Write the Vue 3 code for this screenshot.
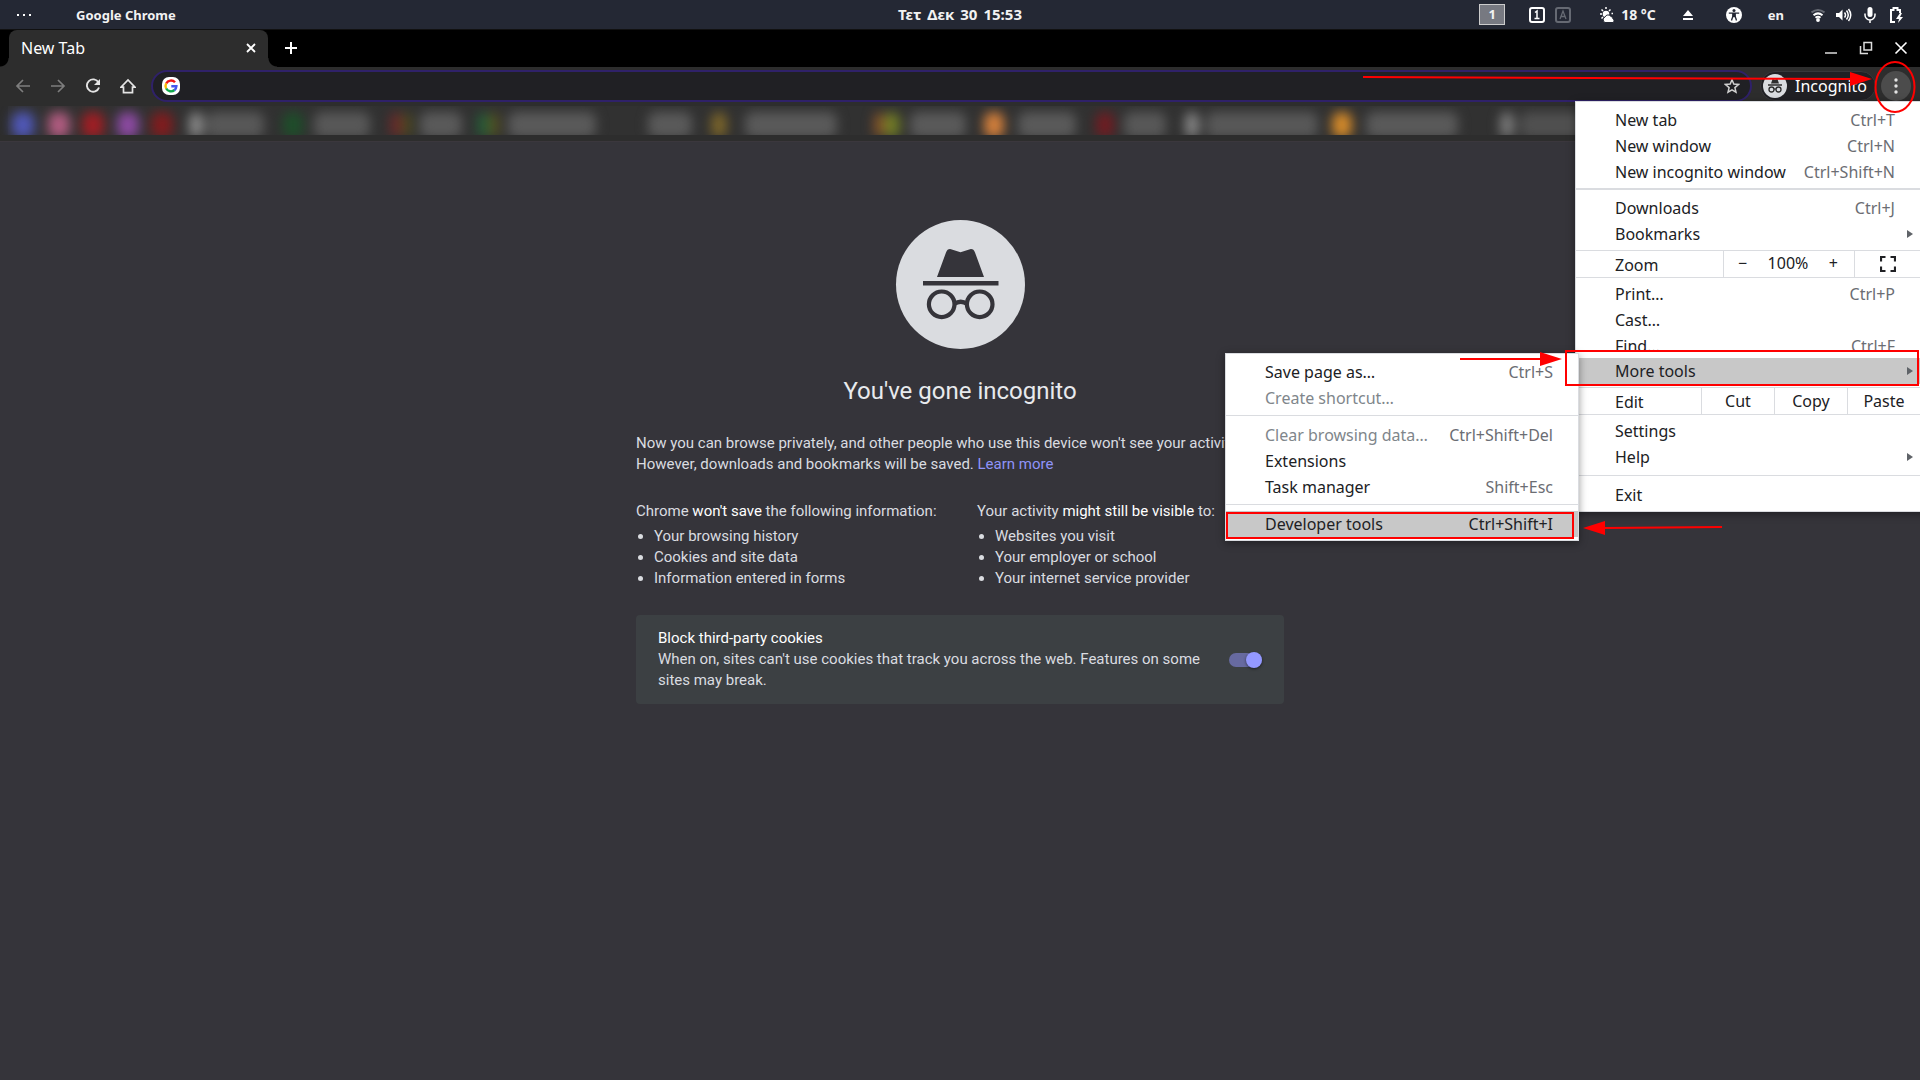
<script setup>
const blurs = [
  { x: 12, w: 22, c: '#5058b8' }, { x: 48, w: 22, c: '#b05c80' }, { x: 82, w: 22, c: '#a01e24' },
  { x: 117, w: 22, c: '#8c4aa2' }, { x: 151, w: 22, c: '#801c1e' }, { x: 189, w: 14, c: '#8a8a8a' },
  { x: 206, w: 58, c: '#585858' }, { x: 283, w: 20, c: '#1e4e2a' }, { x: 314, w: 56, c: '#585858' },
  { x: 390, w: 12, c: '#6a2a2a' }, { x: 402, w: 10, c: '#4c4a20' }, { x: 420, w: 42, c: '#5a5a5a' },
  { x: 477, w: 12, c: '#265c38' }, { x: 489, w: 10, c: '#565220' }, { x: 508, w: 88, c: '#5a5a5a' },
  { x: 648, w: 44, c: '#5a5a5a' }, { x: 711, w: 16, c: '#7a642a' }, { x: 745, w: 92, c: '#5a5a5a' },
  { x: 874, w: 10, c: '#865228' }, { x: 884, w: 16, c: '#707c26' }, { x: 910, w: 56, c: '#5a5a5a' },
  { x: 984, w: 20, c: '#d4803c' }, { x: 1018, w: 58, c: '#5a5a5a' }, { x: 1096, w: 18, c: '#701c22' },
  { x: 1124, w: 42, c: '#585858' }, { x: 1185, w: 14, c: '#868686' }, { x: 1206, w: 112, c: '#585858' },
  { x: 1332, w: 20, c: '#d48a2a' }, { x: 1366, w: 92, c: '#5a5a5a' }, { x: 1500, w: 14, c: '#7a7a7a' },
  { x: 1520, w: 90, c: '#505050' },
]
const infoColumns = [
  { lead: 'Chrome ', strong: "won't save", tail: ' the following information:',
    items: ['Your browsing history', 'Cookies and site data', 'Information entered in forms'] },
  { lead: 'Your activity ', strong: 'might still be visible', tail: ' to:',
    items: ['Websites you visit', 'Your employer or school', 'Your internet service provider'] },
]
</script>

<template>
  <div class="desktop">
    <header class="panel">
      <div class="panel-left">
        <span class="dots"><i></i><i></i><i></i></span>
        <span>Google Chrome</span>
      </div>
      <time class="clock"><span>Τετ</span><span>Δεκ</span><span>30</span><span>15:53</span></time>
      <div class="panel-right">
        <span class="workspace">1</span>
        <svg class="lock" width="42" height="16" viewBox="0 0 42 16" fill="none">
          <rect x="1" y="1" width="14" height="14" rx="2" stroke="#fff" stroke-width="2" />
          <path d="M6 5.500l2-1.500v7.500M5.500 11.500h5" stroke="#fff" stroke-width="1.500" />
          <rect x="27" y="1" width="14" height="14" rx="2" stroke="#666a73" stroke-width="2" />
          <path d="M31 12l3-8 3 8M32 9.500h4" stroke="#666a73" stroke-width="1.300" />
        </svg>
        <svg class="weather" width="16" height="16" viewBox="0 0 16 16">
          <circle cx="7" cy="7" r="3.300" fill="#fff" />
          <path d="M7 0v2M1 7h2M2.500 2.500l1.500 1.500M11.500 2.500L10 4M2.500 11.500L4 10M14 6.500h-1.500" stroke="#fff" stroke-width="1.500" />
          <path d="M6 15.500a3 3 0 010-5.500 3.400 3.400 0 016-.5 2.500 2.500 0 012 2.500 2 2 0 010 3.500z" fill="#fff" stroke="#242834" />
        </svg>
        <span class="temp">18 °C</span>
        <svg class="eject" width="12" height="12" viewBox="0 0 12 12" fill="#fff"><path d="M6 1l5 6H1zM1 9h10v2H1z" /></svg>
        <svg class="access" width="16" height="16" viewBox="0 0 16 16">
          <circle cx="8" cy="8" r="8" fill="#fff" />
          <circle cx="8" cy="3.500" r="1.500" fill="#242834" />
          <path d="M2.800 6.200h10.400M6.800 6.500v3L5.500 13.500M9.200 6.500v3l1.300 4M7 6.500h2v3H7z" stroke="#242834" stroke-width="1.300" fill="#242834" />
        </svg>
        <span class="lang">en</span>
        <svg class="wifi" width="14" height="14" viewBox="0 0 14 14" fill="none" stroke="#fff" stroke-width="2">
          <path d="M.5 4.500q6.500-5 13 0" stroke="#666a73" /><path d="M2.500 7.200q4.500-3.600 9 0M4.500 9.800q2.500-2 5 0" /><circle cx="7" cy="12" r=".9" fill="#fff" />
        </svg>
        <svg class="sound" width="16" height="14" viewBox="0 0 16 14" fill="none" stroke="#fff" stroke-width="1.500">
          <path d="M0 5h3l3.500-3.500v11L3 9H0z" fill="#fff" stroke="none" /><path d="M8.500 4.500q2 2.500 0 5M10.500 2.500q3.500 4.500 0 9M12.500 1q4.500 6 0 12" />
        </svg>
        <svg class="mic" width="12" height="16" viewBox="0 0 12 16" fill="none" stroke="#fff" stroke-width="1.500">
          <rect x="3.500" y="0" width="5" height="10" rx="2.500" fill="#fff" stroke="none" /><path d="M1 6.500v1.500a5 5 0 0010 0V6.500M6 13v3" />
        </svg>
        <svg class="battery" width="15" height="16" viewBox="0 0 15 16">
          <path d="M6 15H2V3h2.500V1h4v2H11v3" fill="none" stroke="#fff" stroke-width="2" /><path d="M11 6l-4 6h3l-1 4 5-6h-3l2-4z" fill="#fff" />
        </svg>
      </div>
    </header>

    <div class="tabstrip">
      <div class="tab"><span>New Tab</span>
        <button class="icon-btn" aria-label="Close tab"><svg width="10" height="10" viewBox="0 0 10 10"><path d="M1 1l8 8M9 1L1 9" stroke="#fff" stroke-width="1.800" /></svg></button>
      </div>
      <button class="icon-btn new-tab" aria-label="Open a new tab"><svg width="14" height="14" viewBox="0 0 14 14"><path d="M7 1v12M1 7h12" stroke="#fff" stroke-width="2" /></svg></button>
      <div class="window-controls">
        <button class="icon-btn" aria-label="Minimize"><svg width="14" height="14" viewBox="0 0 14 14"><path d="M1 12h12" stroke="#ddd" stroke-width="1.500" /></svg></button>
        <button class="icon-btn" aria-label="Restore"><svg width="14" height="14" viewBox="0 0 14 14" fill="none" stroke="#ddd" stroke-width="1.500"><path d="M5 1.500h7.500V9H5zM1.500 5v7.500H9" /></svg></button>
        <button class="icon-btn" aria-label="Close"><svg width="14" height="14" viewBox="0 0 14 14"><path d="M1.500 1.500l11 11M12.500 1.500l-11 11" stroke="#fff" stroke-width="1.600" /></svg></button>
      </div>
    </div>

    <div class="toolbar">
      <div class="nav">
        <button class="icon-btn" aria-label="Back"><svg width="16" height="16" viewBox="0 0 16 16" fill="none" stroke="#7d7d7d" stroke-width="1.700"><path d="M15 8H2M8 2L2 8l6 6" /></svg></button>
        <button class="icon-btn" aria-label="Forward"><svg width="16" height="16" viewBox="0 0 16 16" fill="none" stroke="#7d7d7d" stroke-width="1.700"><path d="M1 8h13M8 2l6 6-6 6" /></svg></button>
        <button class="icon-btn" aria-label="Reload"><svg width="16" height="16" viewBox="0 0 16 16" fill="none" stroke="#e4e4e4" stroke-width="1.900"><path d="M13.500 4.500A6.200 6.200 0 1014 9.500" /><path d="M15 1v6H9z" fill="#e4e4e4" stroke="none" /></svg></button>
        <button class="icon-btn" aria-label="Home"><svg width="16" height="16" viewBox="0 0 16 16" fill="none" stroke="#e4e4e4" stroke-width="1.700"><path d="M1 9.200h2.500v5.500h9V9.200H15L8 2z" /></svg></button>
      </div>
      <div class="omnibox">
        <svg width="18" height="18" viewBox="0 0 18 18" fill="none" stroke-width="2.400">
          <rect width="18" height="18" rx="7" fill="#fff" />
          <path d="M4.200 6.500A5.400 5.400 0 0113 5.300" stroke="#f21818" />
          <path d="M4.200 6.300a5.600 5.600 0 000 5.400" stroke="#fbbc05" />
          <path d="M4.200 11.500a5.400 5.400 0 008.300 1.500" stroke="#0fa84a" />
          <path d="M9.300 9.200h5.100a5.400 5.400 0 01-2 4" stroke="#4657ee" />
        </svg>
        <input aria-label="Address and search bar" type="text" />
        <button class="icon-btn" aria-label="Bookmark this tab"><svg width="16" height="16" viewBox="0 0 16 16" fill="none" stroke="#d0d0d0" stroke-width="1.500"><path d="M8 1.800l1.800 4.300 4.700.4-3.600 3.100 1.100 4.600L8 11.800l-4 2.400 1.100-4.600-3.600-3.100 4.700-.4z" /></svg></button>
      </div>
      <div class="profile">
        <svg width="24" height="24" viewBox="0 0 24 24"><circle cx="12" cy="12" r="12" fill="#dadce0" />
          <path d="M8 9.500L9.600 5l2.400.7 2.400-.7L16 9.500z" fill="#2d2d2d" /><path d="M5 11h14" stroke="#2d2d2d" stroke-width="1.500" />
          <g fill="none" stroke="#2d2d2d" stroke-width="1.300"><circle cx="8.500" cy="15.500" r="2.500" /><circle cx="15.500" cy="15.500" r="2.500" /><path d="M11 15.300q1-.7 2 0" /></g></svg>
        <span>Incognito</span>
      </div>
      <button class="icon-btn kebab" aria-label="Customize and control"><svg width="4" height="16" viewBox="0 0 4 16" fill="#e4e4e4"><circle cx="2" cy="2" r="1.700" /><circle cx="2" cy="8" r="1.700" /><circle cx="2" cy="14" r="1.700" /></svg></button>
    </div>

    <div class="bookmarks">
      <svg width="1600" height="29" viewBox="0 0 1600 29" aria-hidden="true">
        <rect x="8" width="1592" height="29" fill="#313131" />
        <g class="soft"><rect v-for="b in blurs" :key="b.x" :x="b.x" y="6" :width="b.w" height="26" rx="8" :fill="b.c" /></g>
      </svg>
    </div>

    <main class="page">
      <svg class="spy" width="130" height="130" viewBox="-1 0 130 130">
        <circle cx="64.500" cy="64.500" r="64.500" fill="#dadce0" />
        <path d="M41 57L50 32.500q1.500-4 5-3.300l9.500 3 9.500-3q3.500-.7 5 3.300l9 24.500z" fill="#35343a" />
        <path d="M27 63.300h75.500" stroke="#35343a" stroke-width="4.600" />
        <g fill="none" stroke="#35343a" stroke-width="4.200"><circle cx="45.700" cy="84.300" r="12.800" /><circle cx="83.700" cy="84.300" r="12.800" /><path d="M58.200 84q6.500-4.500 13 0" /></g>
      </svg>
      <h1>You've gone incognito</h1>
      <p class="intro">Now you can browse privately, and other people who use this device won't see your activity. However, downloads and bookmarks will be saved. <a href="#">Learn more</a></p>
      <div class="columns">
        <section v-for="col in infoColumns" :key="col.lead">
          <p>{{ col.lead }}<em>{{ col.strong }}</em>{{ col.tail }}</p>
          <ul><li v-for="item in col.items" :key="item">{{ item }}</li></ul>
        </section>
      </div>
      <div class="cookies">
        <label for="cookie-toggle"><em>Block third-party cookies</em><span>When on, sites can't use cookies that track you across the web. Features on some sites may break.</span></label>
        <input id="cookie-toggle" type="checkbox" checked />
      </div>
    </main>

    <nav class="menu main-menu" aria-label="Browser menu">
      <button class="item">New tab<kbd>Ctrl+T</kbd></button>
      <button class="item">New window<kbd>Ctrl+N</kbd></button>
      <button class="item">New incognito window<kbd>Ctrl+Shift+N</kbd></button>
      <hr class="thick" />
      <button class="item">Downloads<kbd>Ctrl+J</kbd></button>
      <button class="item">Bookmarks<i class="arrow"></i></button>
      <div class="split">
        <span class="split-label">Zoom</span>
        <div class="zoom">
          <button aria-label="Zoom out">−</button><span>100%</span><button aria-label="Zoom in">+</button>
        </div>
        <button class="full" aria-label="Full screen"><svg width="16" height="16" viewBox="0 0 16 16" fill="none" stroke="#202124" stroke-width="2.200"><path d="M1 5.500V1h4.500M10.500 1H15v4.500M15 10.500V15h-4.500M5.500 15H1v-4.500" /></svg></button>
      </div>
      <button class="item">Print…<kbd>Ctrl+P</kbd></button>
      <button class="item">Cast…</button>
      <div class="clipped"><button class="item">Find…<kbd>Ctrl+F</kbd></button></div>
      <button class="item active">More tools<i class="arrow"></i></button>
      <div class="split edit">
        <span class="split-label">Edit</span>
        <button>Cut</button><button>Copy</button><button>Paste</button>
      </div>
      <button class="item">Settings</button>
      <button class="item">Help<i class="arrow"></i></button>
      <hr />
      <button class="item">Exit</button>
    </nav>

    <nav class="menu sub-menu" aria-label="More tools">
      <button class="item">Save page as…<kbd>Ctrl+S</kbd></button>
      <button class="item" disabled>Create shortcut…</button>
      <hr />
      <button class="item" disabled>Clear browsing data…<kbd>Ctrl+Shift+Del</kbd></button>
      <button class="item">Extensions</button>
      <button class="item">Task manager<kbd>Shift+Esc</kbd></button>
      <hr />
      <button class="item active">Developer tools<kbd>Ctrl+Shift+I</kbd></button>
    </nav>

    <svg class="marks" width="700" height="560" viewBox="1220 0 700 560" fill="none" stroke="#f00" stroke-width="2" aria-hidden="true">
      <path d="M1363 77L1852 79M1460 359h82M1604 528l118-1" />
      <g fill="#f00" stroke="none"><path d="M1850 72l22 7-22 7zM1540 352l22 7-22 7zM1605 521l-22 7 22 7z" /></g>
      <ellipse cx="1895" cy="87" rx="19.500" ry="25" />
      <rect x="1566" y="351" width="352" height="34" />
      <rect x="1227" y="513" width="346" height="25" />
    </svg>
  </div>
</template>

<style>
body { background: #35343a; }
</style>

<style scoped>
.desktop { position: relative; overflow: hidden; min-height: 100vh; color: #fff; font-family: "Noto Sans", sans-serif; font-size: 16px; }
button { font: inherit; color: inherit; border: 0; background: none; padding: 0; }
.icon-btn { display: flex; align-items: center; justify-content: center; }
svg { display: block; flex: none; }

.panel { display: grid; grid-template-columns: 1fr auto 1fr; align-items: center; height: 29px; background: #242834; border-bottom: 1px solid #111; font-size: 13px; font-weight: 700; color: #f2f2f2; }
.panel-left { display: flex; align-items: center; gap: 45px; padding-left: 17px; }
.dots { display: flex; gap: 4px; }
.dots i { width: 2px; height: 2px; background: #fff; }
.clock { display: flex; gap: 6px; font-size: 15px; padding-bottom: 1px; }
.panel-right { display: flex; align-items: center; justify-content: flex-end; padding-right: 16px; }
.workspace { width: 24px; height: 19px; line-height: 19px; border: 1px solid #ccc; background: #777981; text-align: center; margin-right: 24px; }
.lock { margin-right: 28px; }
.weather { margin-right: 6px; }
.temp { margin-right: 26px; font-size: 14px; }
.eject { margin-right: 32px; }
.access { margin-right: 26px; }
.lang { margin-right: 27px; }
.wifi { margin-right: 11px; }
.sound { margin-right: 12px; }
.mic { margin-right: 13px; }

.tabstrip { display: flex; align-items: stretch; height: 37px; background: #000; padding-left: 9px; }
.tab { position: relative; display: flex; align-items: center; justify-content: space-between; box-sizing: border-box; width: 259px; padding: 0 12px 2px; background: #2d2d2d; border-radius: 8px 8px 0 0; }
.tab::before, .tab::after { content: ""; position: absolute; bottom: 0; width: 9px; height: 9px; }
.tab::before { right: 100%; background: radial-gradient(circle at 0 0, #000 8px, #2d2d2d 9px); }
.tab::after { left: 100%; background: radial-gradient(circle at 100% 0, #000 8px, #2d2d2d 9px); }
.new-tab { margin-left: 16px; padding-bottom: 2px; }
.window-controls { display: flex; gap: 21px; margin-left: auto; padding: 0 12px 2px 0; }

.toolbar { display: flex; align-items: center; box-sizing: border-box; height: 39px; background: #2d2d2d; padding: 0 9px 1px 15px; }
.nav { display: flex; gap: 19px; margin-right: 15px; }
.omnibox { display: flex; align-items: center; flex: 1; box-sizing: border-box; height: 32px; border: 2px solid #2f2169; border-radius: 16px; background: #202024; padding: 0 10px 0 9px; }
.omnibox input { flex: 1; min-width: 0; background: none; border: 0; outline: 0; color: #fff; font: inherit; }
.profile { display: flex; align-items: center; gap: 8px; box-sizing: border-box; height: 30px; border: 1px solid #37373a; border-radius: 15px; background: #202024; margin: 0 5px 0 8px; padding: 0 8px 0 2px; }
.kebab { width: 30px; height: 30px; border-radius: 50%; background: #4c4c4c; }
.bookmarks { height: 35px; background: #2d2d2d; border-bottom: 1px solid #3b373d; overflow: hidden; }
.soft { filter: blur(6px); }

.page { width: 648px; margin: 0 auto; padding-top: 78px; font: 15px/21px Roboto, sans-serif; color: #dadce0; }
.spy { margin: 0 auto; }
h1 { margin: 25px 0 26px; font-size: 24px; line-height: 32px; font-weight: 400; text-align: center; color: #e8eaed; }
p { margin: 0; }
em { font-style: normal; color: #fff; }
a { color: #8f93f8; text-decoration: none; }
.columns { display: grid; grid-template-columns: 341px 1fr; margin-top: 26px; }
ul { margin: 4px 0 0; padding-left: 18px; }
.cookies { display: flex; align-items: center; gap: 24px; margin-top: 26px; padding: 13px 22px; background: #3c4043; border-radius: 4px; }
.cookies label { flex: 1; }
.cookies label em, .cookies label span { display: block; }
#cookie-toggle { appearance: none; position: relative; width: 33px; height: 14px; margin: 0; border-radius: 7px; background: #676aa0; }
#cookie-toggle::after { content: ""; position: absolute; right: 0; top: -1px; width: 16px; height: 16px; border-radius: 50%; background: #9499ff; box-shadow: 0 1px 3px #0008; }

.menu { position: absolute; box-sizing: border-box; background: #fff; color: #202124; border: 1px solid #dadce0; padding: 5px 0 3px; box-shadow: 0 2px 8px #0006; }
.main-menu { top: 101px; right: -8px; width: 353px; }
.sub-menu { top: 353px; right: 341px; width: 354px; }
.item { display: flex; align-items: center; box-sizing: border-box; width: 100%; height: 26px; padding: 0 0 0 39px; text-align: left; white-space: nowrap; }
.item kbd { font: inherit; color: #6b6d73; margin-left: auto; padding-right: 32px; }
.sub-menu .item kbd { padding-right: 25px; }
.item:disabled { color: #80868b; }
.active { background: #c8c8c8; }
.item.active kbd { color: #202124; }
.arrow { margin-left: auto; margin-right: 14px; border-left: 6px solid #5f6368; border-top: 4px solid transparent; border-bottom: 4px solid transparent; }
hr { height: 1px; border: 0; background: #dadce0; margin: 5px 0 6px; }
.sub-menu hr { margin-top: 4px; }
hr.thick { height: 2px; margin: 3px 0 5px; }
.split { display: flex; box-sizing: border-box; height: 28px; margin: 3px 0; border: solid #dadce0; border-width: 1px 0; padding-right: 7px; }
.split-label { flex: 1; padding-left: 39px; line-height: 28px; }
.zoom { display: flex; align-items: center; justify-content: space-between; box-sizing: border-box; width: 131px; border-left: 1px solid #dadce0; padding: 0 16px 2px 14px; }
.full { display: flex; align-items: center; justify-content: center; width: 66px; border-left: 1px solid #dadce0; }
.edit button { width: 73px; border-left: 1px solid #dadce0; }
.clipped { height: 18px; margin-bottom: 7px; overflow: hidden; }
.marks { position: absolute; top: 0; right: 0; pointer-events: none; }
</style>
